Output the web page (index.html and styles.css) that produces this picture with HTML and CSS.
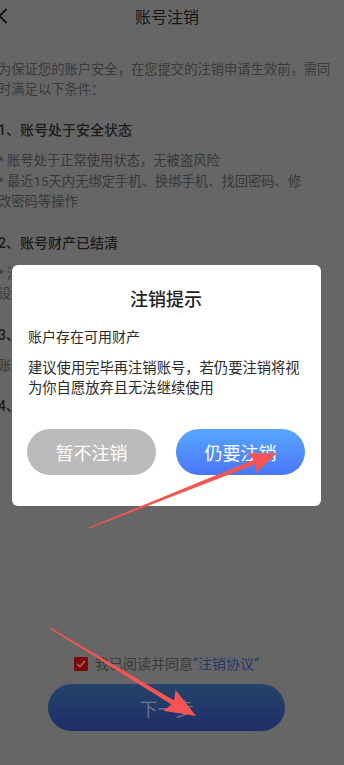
FILE: index.html
```html
<!DOCTYPE html>
<html lang="zh-CN">
<head>
    <meta charset="UTF-8">
    <meta name="viewport" content="width=device-width, initial-scale=1.0">
    <title>账号注销</title>
    <link rel="stylesheet" href="styles.css">
</head>
<body>
    <div class="page">
        <!-- 顶部导航 -->
        <div class="header">
            <svg class="back" width="10" height="16" viewBox="0 0 10 16">
                <polyline points="8.5,1 1.5,8 8.5,15" fill="none" stroke="#111" stroke-width="1.8"/>
            </svg>
            <div class="title">账号注销</div>
            <div></div>
        </div>

        <div class="content">
            <p class="intro">为保证您的账户安全，在您提交的注销申请生效前，需同<br>时满足以下条件：</p>

            <h3 class="cond-title">1、账号处于安全状态</h3>
            <p class="cond-text">* 账号处于正常使用状态，无被盗风险<br>* 最近15天内无绑定手机、换绑手机、找回密码、修<br>改密码等操作</p>

            <h3 class="cond-title">2、账号财产已结清</h3>
            <p class="cond-text">* 没有未使用的余额、积分、优惠券等资产，账号<br>设备中无未结清的订单</p>

            <h3 class="cond-title">3、账号无任何纠纷</h3>
            <p class="cond-text">账号无未处理完的投诉、举报等纠纷</p>

            <h3 class="cond-title">4、账号权限解除</h3>
        </div>

        <div class="footer">
            <div class="agree-row">
                <span class="checkbox">
                    <svg width="10" height="8" viewBox="0 0 10 8">
                        <polyline points="1,4 4,6.5 9,1" fill="none" stroke="#b46a6a" stroke-width="1.3"/>
                    </svg>
                </span>
                <span>我已阅读并同意<span class="link">“注销协议”</span></span>
            </div>
            <button class="next-btn">下一步</button>
        </div>
    </div>

    <!-- 弹窗 -->
    <div class="mask">
        <div class="dialog">
            <div class="dialog-title">注销提示</div>
            <div class="dialog-sub">账户存在可用财产</div>
            <div class="dialog-text">建议使用完毕再注销账号，若仍要注销将视为你自愿放弃且无法继续使用</div>
            <div class="dialog-buttons">
                <button class="btn btn-cancel">暂不注销</button>
                <button class="btn btn-confirm">仍要注销</button>
            </div>
        </div>
    </div>

    <!-- 红色箭头标注 -->
    <svg class="arrows" width="344" height="765" viewBox="0 0 344 765">
        <polygon fill="#f45454" points="88.8,527.5 253.8,459.7 246.9,453.2 277,453 255.1,473.6 255.6,464.3 89.2,528.5"/>
        <polygon fill="#f45454" points="50.3,627.6 174.1,700.4 175.6,690.1 196,716 163.2,710.7 171.5,704.6 49.7,628.4"/>
    </svg>
</body>
</html>
```

FILE: styles.css
```css
html, body {
    margin: 0;
    padding: 0;
}
body {
    width: 344px;
    height: 765px;
    overflow: hidden;
    background-color: #666666;
    font-family: Roboto, "Noto Sans CJK SC", sans-serif;
    position: relative;
}
.page {
    margin-left: -5px;
    width: 344px;
    height: 765px;
    display: flex;
    flex-direction: column;
}
.header {
    height: 32px;
    display: grid;
    grid-template-columns: 40px 1fr 40px;
    align-items: center;
}
.back {
    display: block;
    margin-left: 3px;
}
.title {
    text-align: center;
    font-size: 16px;
    color: #141414;
}
.content {
    padding-left: 3px;
    padding-top: 28px;
}
.intro {
    margin: 0;
    font-size: 13.3px;
    line-height: 20px;
    color: #3a3a3a;
    white-space: nowrap;
}
.cond-title {
    margin: 20px 0 0;
    font-size: 14px;
    font-weight: 500;
    line-height: 20px;
    color: #1c1c1c;
    white-space: nowrap;
}
.cond-text {
    margin: 11px 0 0;
    font-size: 13.3px;
    line-height: 20.5px;
    color: #383838;
    white-space: nowrap;
}
.footer {
    margin-top: auto;
    padding-bottom: 34px;
    display: flex;
    flex-direction: column;
    align-items: center;
}
.agree-row {
    display: flex;
    align-items: center;
    gap: 7px;
    font-size: 14px;
    line-height: 20px;
    color: #3a3a3a;
    margin-left: -1px;
}
.checkbox {
    width: 14px;
    height: 14px;
    border-radius: 1px;
    background-color: #7d0a0a;
    display: flex;
    align-items: center;
    justify-content: center;
}
.link {
    color: #23396b;
}
.next-btn {
    margin-top: 10px;
    width: 237px;
    height: 47px;
    border: none;
    border-radius: 24px;
    background: linear-gradient(180deg, #244469, #1f2e69);
    color: #6c7585;
    font-family: inherit;
    font-size: 18px;
    margin-left: -1px;
}
.mask {
    position: absolute;
    top: 0;
    left: 0;
    width: 344px;
    height: 765px;
}
.dialog {
    margin: 265px 0 0 12px;
    width: 309px;
    height: 241px;
    box-sizing: border-box;
    background-color: #fff;
    border-radius: 6px;
    padding: 22px 16px 0 15px;
}
.dialog-title {
    text-align: center;
    font-size: 18px;
    font-weight: 500;
    line-height: 26px;
    color: #222;
}
.dialog-sub {
    margin-top: 14px;
    padding-left: 1px;
    font-size: 14px;
    line-height: 20px;
    color: #2a2a2a;
}
.dialog-text {
    margin-top: 11px;
    padding-left: 1px;
    font-size: 14.3px;
    line-height: 20px;
    color: #2a2a2a;
}
.dialog-buttons {
    margin-top: 31px;
    display: flex;
    justify-content: space-between;
}
.btn {
    width: 129px;
    height: 46px;
    border: none;
    border-radius: 23px;
    color: #fff;
    font-family: inherit;
    font-size: 18px;
}
.btn-cancel {
    background-color: #bbbbbb;
}
.btn-confirm {
    background: linear-gradient(180deg, #58a7ff, #4a76f5);
}
.arrows {
    position: absolute;
    top: 0;
    left: 0;
    pointer-events: none;
}
```
